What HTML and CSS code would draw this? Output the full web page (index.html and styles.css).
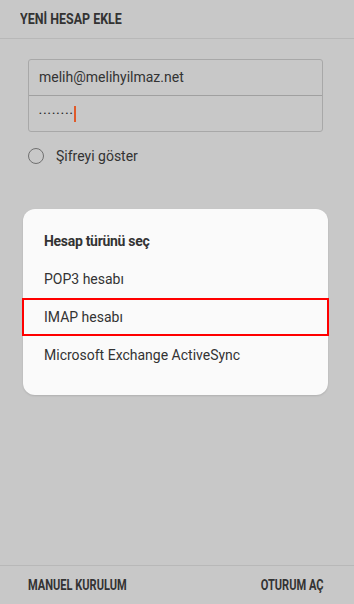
FILE: index.html
```html
<html>
<head>
<title>Yeni hesap ekle</title>
<meta charset="UTF-8">
<link rel="stylesheet" href="styles.css">
</head>
<body>
<div class="topbar"><span class="narrow">YENİ HESAP EKLE</span></div>

<div class="content">
	<div class="fields">
		<div class="field">melih@melihyilmaz.net</div>
		<div class="field pass"><span class="dots">••••••••</span><span class="caret"></span></div>
	</div>
	<div class="showpass"><span class="radio"></span> Şifreyi göster</div>

	<div class="dialog">
		<div class="dtitle">Hesap türünü seç</div>
		<div class="option">POP3 hesabı</div>
		<div class="option picked">IMAP hesabı</div>
		<div class="option">Microsoft Exchange ActiveSync</div>
	</div>
</div>

<div class="bottombar">
	<span class="narrow">MANUEL KURULUM</span>
	<span class="narrow right">OTURUM AÇ</span>
</div>
</body>
</html>
```

FILE: styles.css
```css
html {
	background-color: #c8c8c8;
}

body {
	margin: 0;
	height: 604px;
	display: flex;
	flex-direction: column;
	font-family: Roboto, "Liberation Sans", sans-serif;
	color: #363636;
	background-color: #c8c8c8;
}

.narrow {
	display: inline-block;
	transform: scaleX(0.83);
	transform-origin: left center;
}

.narrow.right {
	transform-origin: right center;
}

.topbar {
	height: 38px;
	line-height: 38px;
	padding-left: 20px;
	border-bottom: 1px solid #b8b8b8;
	font-size: 15px;
	font-weight: bold;
	color: #333;
}

.content {
	padding: 20px 26px 0 28px;
}

.fields {
	width: 293px;
	border: 1px solid #a8a8a8;
	border-radius: 3px;
}

.field {
	height: 35px;
	line-height: 35px;
	padding-left: 10px;
	font-size: 14px;
	color: #333;
}

.field + .field {
	border-top: 1px solid #a0a0a0;
}

.pass {
	display: flex;
	align-items: center;
}

.dots {
	font-size: 8px;
	letter-spacing: 1.7px;
	color: #222;
}

.caret {
	display: inline-block;
	width: 2px;
	height: 16px;
	margin-left: 0;
	background-color: #e05a2a;
}

.showpass {
	display: flex;
	align-items: center;
	margin-top: 16px;
	font-size: 14px;
	color: #333;
}

.radio {
	width: 14px;
	height: 14px;
	border: 1.5px solid #707070;
	border-radius: 50%;
	margin-right: 12px;
}

.dialog {
	margin: 45px 0 0 -5px;
	width: 305px;
	padding: 13px 0 21px 0;
	background-color: #fafafa;
	border-radius: 12px;
	box-shadow: 0 1px 2px rgba(0, 0, 0, 0.12);
}

.dtitle {
	height: 38px;
	line-height: 38px;
	padding-left: 21px;
	font-size: 14px;
	font-weight: bold;
	letter-spacing: -0.3px;
	color: #333;
}

.option {
	height: 38px;
	line-height: 38px;
	padding-left: 21px;
	font-size: 14px;
	color: #333;
	box-sizing: border-box;
}

.picked {
	border: 2px solid #ff0000;
	margin: 0 -1px;
	padding-left: 20px;
	line-height: 34px;
}

.bottombar {
	margin-top: auto;
	height: 38px;
	border-top: 1px solid #b8b8b8;
	display: flex;
	align-items: center;
	justify-content: space-between;
	padding: 0 31px 0 28px;
	font-size: 14px;
	font-weight: bold;
	color: #333;
}

.bottombar .narrow {
	transform: scaleX(0.79);
}
```
